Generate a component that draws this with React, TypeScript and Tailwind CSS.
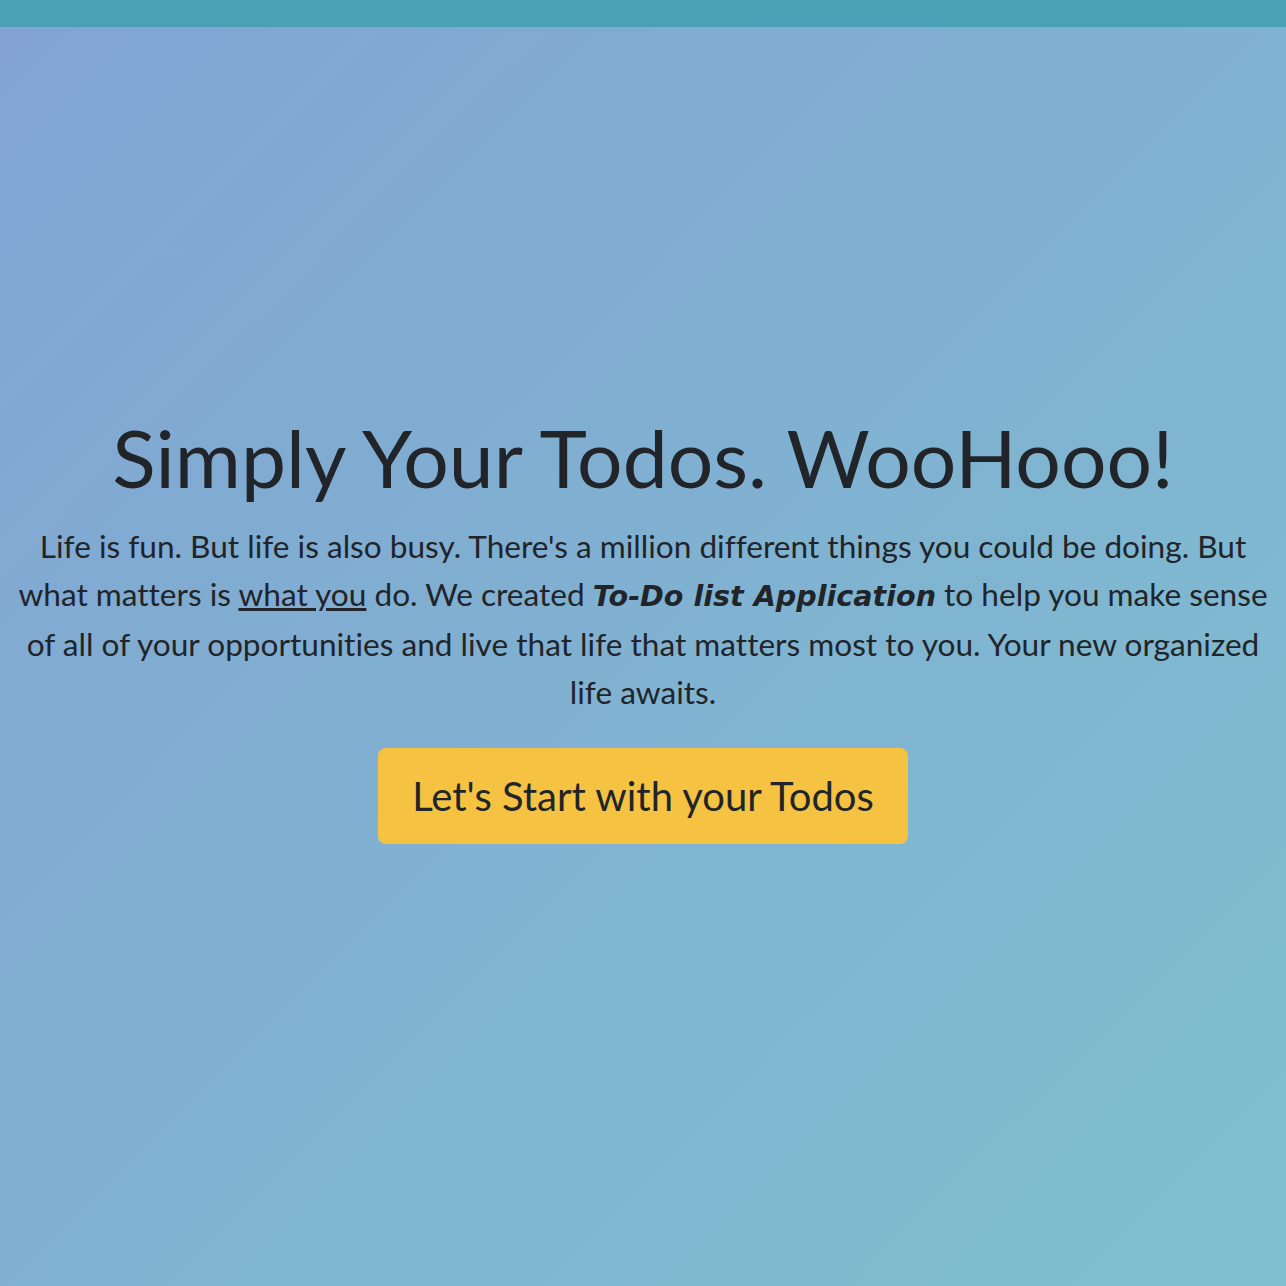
export default function App() {
  return (
    <div className="min-h-screen flex flex-col bg-[linear-gradient(135deg,#82a3d3_0%,#7ec0cf_100%)] text-[#212529]" style={{ fontFamily: 'Lato, "Noto Sans", sans-serif' }}>
      <div className="h-[27px] bg-[#4aa0b5]" />
      <main className="flex-1 flex flex-col items-center justify-center px-[15px] text-center pb-[60px]">
        <h1 className="text-[80.4px] leading-[1.2] font-normal mb-[16px]">Simply Your Todos. WooHooo!</h1>
        <p className="text-[31.6px] leading-[48px] [font-variant-ligatures:none]">
          Life is fun. But life is also busy. There's a million different things you could be doing. But what matters is{' '}
          <u>what you</u> do. We created{' '}
          <b className="font-bold italic text-[28.6px] font-['DejaVu_Sans',sans-serif]">To-Do list Application</b> to help you make sense of all of your opportunities and live that life that matters most to you. Your new organized life awaits.
        </p>
        <button className="mt-[32px] bg-[#f5c242] rounded-[8px] px-[34px] h-[96px] text-[40px]">Let's Start with your Todos</button>
      </main>
    </div>
  );
}
